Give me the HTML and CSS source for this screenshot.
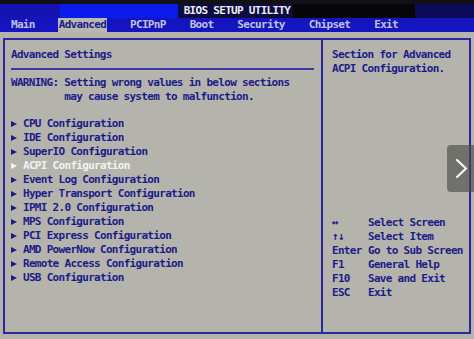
FILE: index.html
```html
<!DOCTYPE html>
<html lang="en">
<head>
  <meta charset="UTF-8">
  <title>BIOS Setup Utility</title>
  <link rel="stylesheet" href="styles.css">
</head>
<body>

  <div class="topline"></div>
  <div class="titlebar">BIOS SETUP UTILITY</div>

  <nav class="menubar">
    <span>Main</span>
    <span class="active">Advanced</span>
    <span>PCIPnP</span>
    <span>Boot</span>
    <span>Security</span>
    <span>Chipset</span>
    <span>Exit</span>
  </nav>

  <div class="screen">
    <div class="settings">
      <div class="heading">Advanced Settings</div>
      <div class="rule"></div>
      <div class="warning">WARNING: Setting wrong values in below sections
         may cause system to malfunction.</div>

      <ul class="items">
        <li>CPU Configuration</li>
        <li>IDE Configuration</li>
        <li>SuperIO Configuration</li>
        <li class="selected">ACPI Configuration</li>
        <li>Event Log Configuration</li>
        <li>Hyper Transport Configuration</li>
        <li>IPMI 2.0 Configuration</li>
        <li>MPS Configuration</li>
        <li>PCI Express Configuration</li>
        <li>AMD PowerNow Configuration</li>
        <li>Remote Access Configuration</li>
        <li>USB Configuration</li>
      </ul>
    </div>

    <div class="help">
      <div class="help-text">Section for Advanced<br>ACPI Configuration.</div>

      <div class="keys">
        <span>↔</span><span>Select Screen</span>
        <span>↑↓</span><span>Select Item</span>
        <span>Enter</span><span>Go to Sub Screen</span>
        <span>F1</span><span>General Help</span>
        <span>F10</span><span>Save and Exit</span>
        <span>ESC</span><span>Exit</span>
      </div>
    </div>
  </div>

  <div class="next">
    <svg width="27" height="47" viewBox="0 0 27 47">
      <polyline points="10,15 19,23.5 10,32" fill="none" stroke="#f4f4f4" stroke-width="2.2" stroke-linecap="round" stroke-linejoin="round"/>
    </svg>
  </div>

</body>
</html>
```

FILE: styles.css
```css
body {
  margin: 0;
  background: #b4b4ac;
  font-family: "DejaVu Sans Mono", "Liberation Mono", monospace;
  font-weight: bold;
  font-size: 11px;
  letter-spacing: -0.7px;
  line-height: 14px;
  color: #1c1c88;
  width: 474px;
  height: 339px;
  overflow: hidden;
  position: relative;
}

.topline {
  height: 4px;
  background: #101016;
}

.titlebar {
  height: 14px;
  text-align: center;
  color: #ececf4;
  background: linear-gradient(to right,
    #1414b4 0 60px,
    #0a1cec 60px 178px,
    #0c0c3e 178px 293px,
    #060608 293px 415px,
    #0a0a58 415px);
}

.menubar {
  height: 14px;
  display: flex;
  gap: 24px;
  padding-left: 11px;
  background: #1515bf;
  color: #c0c0dc;
}

.menubar .active {
  background: #b8b8b0;
  color: #1c1c88;
  padding: 0 1px;
  margin: 0 -1px;
}

.screen {
  margin: 6px 3px 0 3px;
  height: 292px;
  border: 2px solid #2a2a9c;
  display: grid;
  grid-template-columns: 318px 1fr;
}

.settings {
  border-right: 2px solid #2a2a9c;
  padding: 8px 7px 0 6px;
}

.rule {
  height: 1.5px;
  background: #3a3aa4;
  margin: 6px 0 6px 0;
}

.warning {
  white-space: pre;
}

.items {
  list-style: none;
  margin: 13.5px 0 0 0;
  padding: 0;
}

.items li::before {
  content: "";
  display: inline-block;
  border-left: 6px solid currentColor;
  border-top: 3.5px solid transparent;
  border-bottom: 3.5px solid transparent;
  margin: 0 6px 1px 0;
  vertical-align: middle;
}

.items .selected {
  color: #f2f2f2;
}

.help {
  display: flex;
  flex-direction: column;
  padding: 8px 0 32px 9px;
}

.keys {
  margin-top: auto;
  display: grid;
  grid-template-columns: 36px 1fr;
}

.next {
  position: absolute;
  left: 447px;
  top: 145px;
  width: 27px;
  height: 47px;
  border-radius: 4px 0 0 4px;
  background: rgba(72, 72, 70, 0.62);
}

.next svg {
  display: block;
}
```
